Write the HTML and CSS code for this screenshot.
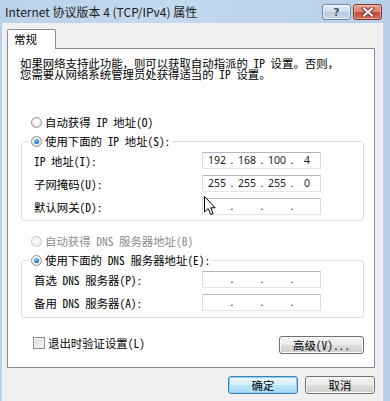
FILE: index.html
```html
<!DOCTYPE html>
<html lang="zh-CN">
<head>
    <meta charset="UTF-8">
    <meta name="viewport" content="width=device-width, initial-scale=1.0">
    <title>Internet 协议版本 4 (TCP/IPv4) 属性</title>
    <link rel="stylesheet" href="styles.css">
</head>
<body>
    <div class="window">
        <div class="titlebar">
            <span class="title">Internet 协议版本 4 (TCP/IPv4) 属性</span>
            <div class="caption-buttons">
                <button class="cap-btn help">?</button>
                <button class="cap-btn close">
                    <svg width="14" height="10" viewBox="0 0 14 10">
                        <path d="M3 1.5 L11 8.5 M11 1.5 L3 8.5" stroke="#7a2a22" stroke-width="4" stroke-linecap="square"/>
                        <path d="M3 1.5 L11 8.5 M11 1.5 L3 8.5" stroke="#ffffff" stroke-width="2.2" stroke-linecap="square"/>
                    </svg>
                </button>
            </div>
        </div>

        <div class="client">
            <div class="tabs">
                <div class="tab">常规</div>
            </div>

            <div class="panel">
                <p class="desc">如果网络支持此功能，则可以获取自动指派的 IP 设置。否则，<br>您需要从网络系统管理员处获得适当的 IP 设置。</p>

                <label class="option first"><span class="radio"></span>自动获得 IP 地址(O)</label>

                <fieldset class="group">
                    <legend><label class="option"><span class="radio checked"></span>使用下面的 IP 地址(S):</label></legend>
                    <div class="row">
                        <span class="lbl">IP 地址(I):</span>
                        <div class="ipbox"><span class="seg">192</span><span class="dot">.</span><span class="seg">168</span><span class="dot">.</span><span class="seg">100</span><span class="dot">.</span><span class="seg">4</span></div>
                    </div>
                    <div class="row">
                        <span class="lbl">子网掩码(U):</span>
                        <div class="ipbox"><span class="seg">255</span><span class="dot">.</span><span class="seg">255</span><span class="dot">.</span><span class="seg">255</span><span class="dot">.</span><span class="seg">0</span></div>
                    </div>
                    <div class="row">
                        <span class="lbl">默认网关(D):</span>
                        <div class="ipbox with-cursor"><span class="seg"></span><span class="dot">.</span><span class="seg"></span><span class="dot">.</span><span class="seg"></span><span class="dot">.</span><span class="seg"></span>
                            <svg class="cursor" width="12" height="20" viewBox="0 0 12 20">
                                <path d="M0.5 0.5 L0.5 16 L4.2 12.6 L6.8 18.6 L9.2 17.6 L6.7 11.8 L11.2 11.8 Z" fill="#ffffff" stroke="#000000" stroke-width="1"/>
                            </svg>
                        </div>
                    </div>
                </fieldset>

                <label class="option disabled"><span class="radio"></span>自动获得 DNS 服务器地址(B)</label>

                <fieldset class="group dns">
                    <legend><label class="option"><span class="radio checked"></span>使用下面的 DNS 服务器地址(E):</label></legend>
                    <div class="row">
                        <span class="lbl">首选 DNS 服务器(P):</span>
                        <div class="ipbox"><span class="seg"></span><span class="dot">.</span><span class="seg"></span><span class="dot">.</span><span class="seg"></span><span class="dot">.</span><span class="seg"></span></div>
                    </div>
                    <div class="row">
                        <span class="lbl">备用 DNS 服务器(A):</span>
                        <div class="ipbox"><span class="seg"></span><span class="dot">.</span><span class="seg"></span><span class="dot">.</span><span class="seg"></span><span class="dot">.</span><span class="seg"></span></div>
                    </div>
                </fieldset>

                <div class="panel-foot">
                    <label class="check"><span class="checkbox"></span>退出时验证设置(L)</label>
                    <button class="btn advanced">高级(V)...</button>
                </div>
            </div>

            <div class="actions">
                <button class="btn default">确定</button>
                <button class="btn">取消</button>
            </div>
        </div>
    </div>
</body>
</html>
```

FILE: styles.css
```css
* {
    margin: 0;
    padding: 0;
    box-sizing: border-box;
}

body {
    width: 390px;
    height: 401px;
    overflow: hidden;
    font-family: "Noto Sans Mono CJK SC", "Noto Sans CJK SC", monospace;
    font-size: 11.4px;
    color: #000000;
}

.window {
    width: 390px;
    height: 401px;
    display: flex;
    flex-direction: column;
    background: linear-gradient(90deg, #b9d1ea, #c4d9ef 40%, #b7cfe9);
}

/* Title bar */
.titlebar {
    height: 23px;
    display: flex;
    justify-content: space-between;
    padding: 0 8px 0 5px;
}

.title {
    font-family: "Noto Sans CJK SC", sans-serif;
    font-size: 12px;
    line-height: 24px;
    color: #1b1b1b;
}

.caption-buttons {
    display: flex;
    gap: 2px;
    padding-top: 4px;
}

.cap-btn {
    width: 29px;
    height: 16px;
    border-radius: 3px;
    display: flex;
    align-items: center;
    justify-content: center;
}

.help {
    border: 1px solid #7189a8;
    background: linear-gradient(#e4edf7, #ccdcee 50%, #b7cbe3 50%, #c7d8ec);
    box-shadow: inset 0 0 0 1px rgba(255, 255, 255, 0.6);
    font-family: "DejaVu Sans", sans-serif;
    font-weight: bold;
    font-size: 11px;
    color: #3a4a60;
    text-shadow: 0 0 2px #ffffff;
}

.close {
    border: 1px solid #7e3128;
    background: linear-gradient(#e8a795, #d5806e 50%, #c54a3a 50%, #d36b54);
    box-shadow: inset 0 0 0 1px rgba(255, 220, 210, 0.5);
}

/* Client area */
.client {
    flex: 1;
    margin: 0 7px 0 2px;
    background-color: #f0f0f0;
    padding: 6px 7px 0 5px;
    border-right: 1px solid #f8fbfe;
}

.tabs {
    display: flex;
}

.tab {
    position: relative;
    z-index: 1;
    width: 49px;
    height: 20px;
    margin-bottom: -1px;
    padding-left: 6px;
    border: 1px solid #898c95;
    border-bottom: none;
    border-radius: 2px 2px 0 0;
    background-color: #ffffff;
    line-height: 19px;
    font-size: 11.6px;
}

.panel {
    height: 320px;
    border: 1px solid #898c95;
    background-color: #ffffff;
    padding: 9px 10px 0 13px;
}

.desc {
    margin-left: -1px;
    line-height: 11px;
    white-space: nowrap;
}

/* Radio options */
.option {
    display: flex;
    align-items: center;
    gap: 3px;
    height: 14px;
    margin-left: 10px;
    white-space: nowrap;
}

.option.first {
    margin-top: 35px;
}

.option.disabled {
    margin-top: 13px;
    color: #8c8c8c;
}

legend .option {
    margin-left: 0;
}

.radio {
    width: 11px;
    height: 11px;
    border-radius: 50%;
    border: 1px solid #8e8f8f;
    background: radial-gradient(circle at 50% 40%, #ffffff 20%, #dcdcdc 90%);
    display: grid;
    place-items: center;
    flex-shrink: 0;
}

.radio.checked::after {
    content: '';
    width: 5px;
    height: 5px;
    border-radius: 50%;
    background: radial-gradient(circle at 40% 35%, #8fd0f7, #1d73c0 60%, #0f4d8c);
}

.option.disabled .radio {
    border-color: #c4c4c4;
    background: #f4f4f4;
}

/* Group boxes */
.group {
    margin-top: 5px;
    border: 1px solid #d5dfe5;
    border-radius: 3px;
    padding: 4px 0 5px 12px;
}

.group.dns {
    padding-bottom: 6px;
}

.group legend {
    margin-left: -5px;
    padding: 0 2px;
}

.row {
    display: flex;
    align-items: center;
    height: 17px;
}

.row + .row {
    margin-top: 6px;
}

.lbl {
    width: 168px;
    white-space: nowrap;
}

.ipbox {
    width: 119px;
    height: 17px;
    display: flex;
    padding-left: 3px;
    border: 1px solid;
    border-color: #b3b6bd #d9dbe1 #e2e5ea #d9dbe1;
    background-color: #ffffff;
    font-family: "Noto Sans", sans-serif;
    font-size: 10.5px;
    line-height: 15px;
    color: #1a1a1a;
}

.seg {
    width: 22px;
    text-align: center;
}

.dot {
    width: 8px;
    text-align: center;
}

.with-cursor {
    position: relative;
}

.cursor {
    position: absolute;
    left: 1px;
    top: -3px;
}

/* Bottom of panel */
.panel-foot {
    margin-top: 18px;
    display: flex;
    justify-content: space-between;
    align-items: flex-start;
}

.check {
    display: flex;
    align-items: center;
    gap: 3px;
    height: 12px;
    margin-left: 12px;
    margin-top: 1px;
}

.checkbox {
    width: 12px;
    height: 12px;
    border: 1px solid #8e8f8f;
    background: linear-gradient(135deg, #dcdcdc, #f6f6f6);
    box-shadow: inset 0 0 0 1px #f4f4f4;
}

.btn {
    height: 18px;
    border: 1px solid #707070;
    border-radius: 3px;
    background: linear-gradient(#f2f2f2, #ebebeb 50%, #dddddd 50%, #cfcfcf);
    box-shadow: inset 0 0 0 1px #fbfbfb;
    font-family: "Noto Sans Mono CJK SC", "Noto Sans CJK SC", monospace;
    font-size: 11.4px;
    line-height: 15px;
    color: #000000;
}

.advanced {
    width: 85px;
}

.actions {
    margin-top: 8px;
    display: flex;
    justify-content: flex-end;
    gap: 7px;
}

.actions .btn {
    width: 70px;
}

.btn.default {
    border-color: #3c7fb1;
    background: linear-gradient(#eaf6fd, #d9f0fc 50%, #bee6fd 50%, #a7d9f5);
    box-shadow: inset 0 0 0 1px #8fd2f5;
}
```
